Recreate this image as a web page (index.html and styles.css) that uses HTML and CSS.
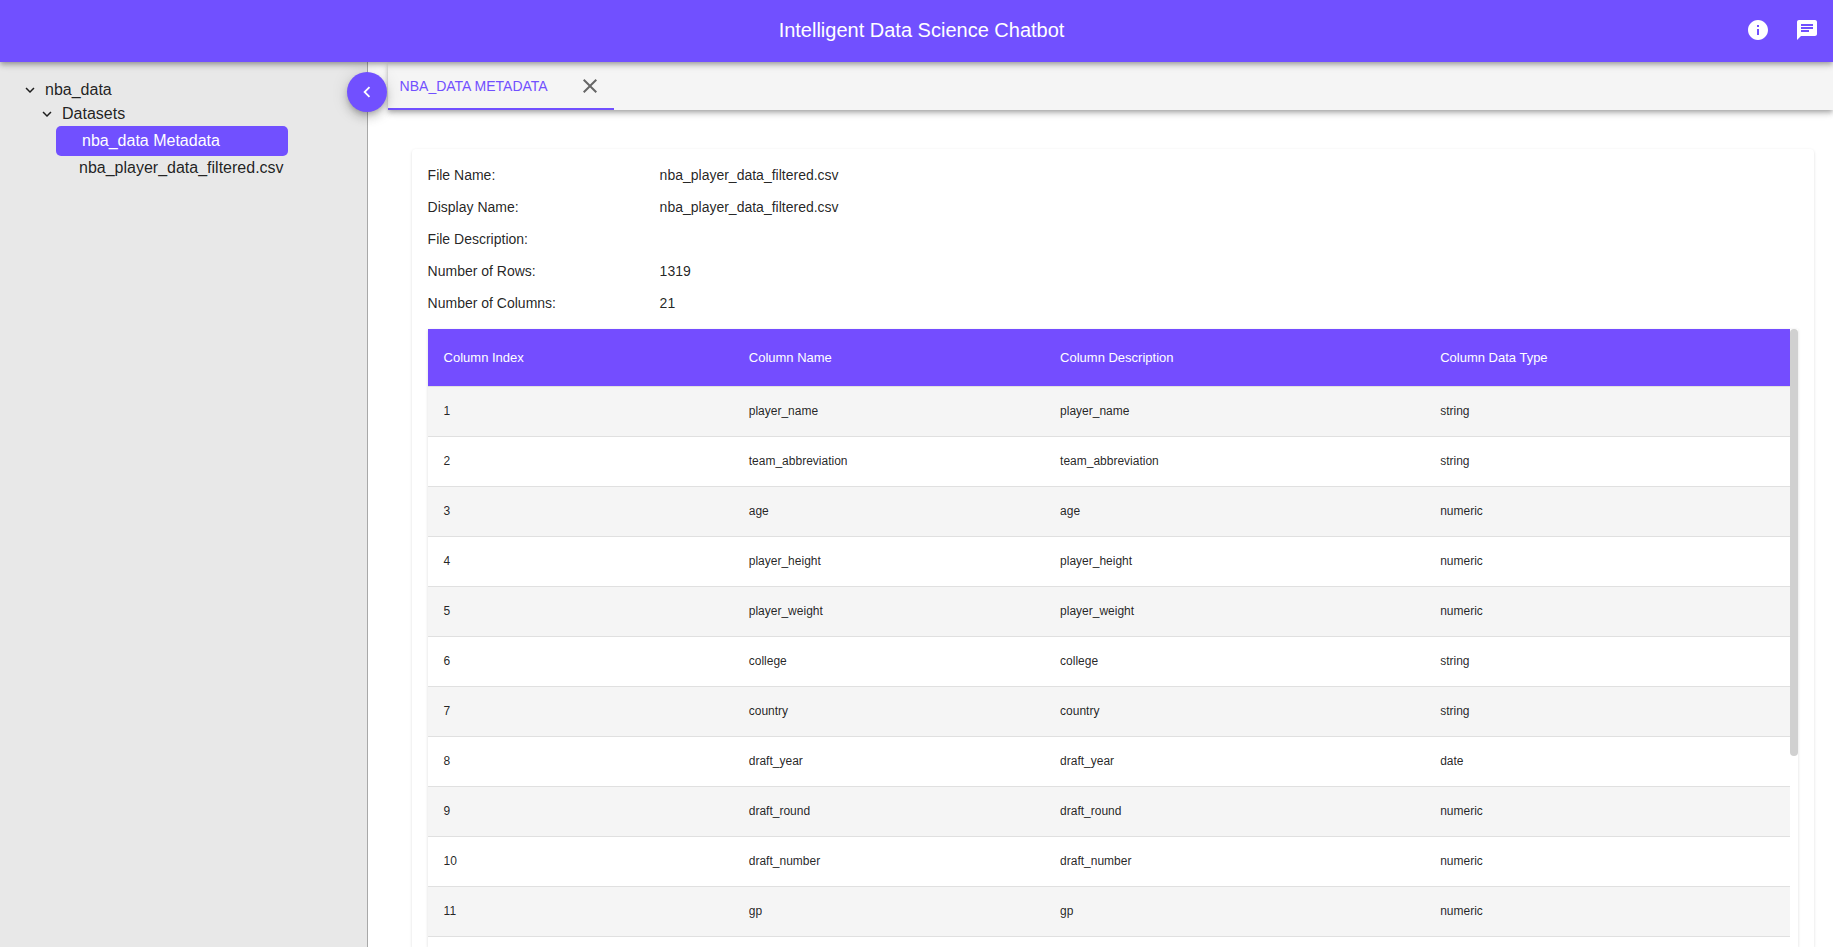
FILE: index.html
```html
<!DOCTYPE html>
<html lang="en">
<head>
<meta charset="utf-8">
<title>Intelligent Data Science Chatbot</title>
<link rel="stylesheet" href="styles.css">
</head>
<body>
<header class="topbar">
  <h1 class="topbar-title">Intelligent Data Science Chatbot</h1>
  <div class="topbar-actions">
    <button class="icon-button" type="button" aria-label="Information"><svg viewBox="0 0 24 24"><path d="M12 2C6.480 2 2 6.480 2 12s4.480 10 10 10 10-4.480 10-10S17.520 2 12 2zm1 15h-2v-6h2v6zm0-8h-2V7h2v2z"/></svg></button>
    <button class="icon-button" type="button" aria-label="Chat"><svg viewBox="0 0 24 24"><path d="M20 2H4c-1.100 0-1.990.9-1.990 2L2 22l4-4h14c1.100 0 2-.9 2-2V4c0-1.100-.9-2-2-2zM6 9h12v2H6V9zm8 5H6v-2h8v2zm4-6H6V6h12v2z"/></svg></button>
  </div>
</header>
<div class="workspace">
  <nav class="sidebar">
    <ul class="tree">
      <li>
        <div class="tree-branch"><svg class="chevron" viewBox="0 0 24 24"><path d="M7.410 8.590 12 13.170l4.590-4.580L18 10l-6 6-6-6 1.410-1.410z"/></svg>nba_data</div>
        <ul class="tree-group">
          <li>
            <div class="tree-branch"><svg class="chevron" viewBox="0 0 24 24"><path d="M7.410 8.590 12 13.170l4.590-4.580L18 10l-6 6-6-6 1.410-1.410z"/></svg>Datasets</div>
            <ul class="tree-leaves">
              <li class="tree-leaf tree-leaf-selected">nba_data Metadata</li>
              <li class="tree-leaf">nba_player_data_filtered.csv</li>
            </ul>
          </li>
        </ul>
      </li>
    </ul>
    <button class="collapse" type="button" aria-label="Collapse sidebar"><svg viewBox="0 0 24 24"><path d="M15.410 7.410 14 6l-6 6 6 6 1.410-1.410L10.830 12z"/></svg></button>
  </nav>
  <main class="content">
    <div class="tabs" role="tablist">
      <div class="tab">
        <button class="tab-label" type="button" role="tab" aria-selected="true">nba_data Metadata</button>
        <button class="tab-close" type="button" aria-label="Close tab"><svg viewBox="0 0 24 24"><path d="M19 6.410 17.590 5 12 10.590 6.410 5 5 6.410 10.590 12 5 17.590 6.410 19 12 13.410 17.590 19 19 17.590 13.410 12z"/></svg></button>
      </div>
    </div>
    <section class="card">
      <dl class="facts">
        <dt>File Name:</dt><dd>nba_player_data_filtered.csv</dd>
        <dt>Display Name:</dt><dd>nba_player_data_filtered.csv</dd>
        <dt>File Description:</dt><dd></dd>
        <dt>Number of Rows:</dt><dd>1319</dd>
        <dt>Number of Columns:</dt><dd>21</dd>
      </dl>
      <div class="table-panel">
        <table class="columns">
          <colgroup><col class="col-index"><col class="col-name"><col class="col-description"><col></colgroup>
          <thead><tr><th>Column Index</th><th>Column Name</th><th>Column Description</th><th>Column Data Type</th></tr></thead>
          <tbody>
            <tr><td>1</td><td>player_name</td><td>player_name</td><td>string</td></tr>
            <tr><td>2</td><td>team_abbreviation</td><td>team_abbreviation</td><td>string</td></tr>
            <tr><td>3</td><td>age</td><td>age</td><td>numeric</td></tr>
            <tr><td>4</td><td>player_height</td><td>player_height</td><td>numeric</td></tr>
            <tr><td>5</td><td>player_weight</td><td>player_weight</td><td>numeric</td></tr>
            <tr><td>6</td><td>college</td><td>college</td><td>string</td></tr>
            <tr><td>7</td><td>country</td><td>country</td><td>string</td></tr>
            <tr><td>8</td><td>draft_year</td><td>draft_year</td><td>date</td></tr>
            <tr><td>9</td><td>draft_round</td><td>draft_round</td><td>numeric</td></tr>
            <tr><td>10</td><td>draft_number</td><td>draft_number</td><td>numeric</td></tr>
            <tr><td>11</td><td>gp</td><td>gp</td><td>numeric</td></tr>
          </tbody>
        </table>
        <div class="scroll-track"><div class="scroll-thumb"></div></div>
      </div>
    </section>
  </main>
</div>
</body>
</html>
```
FILE: styles.css
```css
* { box-sizing: border-box; }

body {
  margin: 0;
  height: 100vh;
  display: flex;
  flex-direction: column;
  overflow: hidden;
  font-family: "Liberation Sans", Arial, sans-serif;
  font-size: 14px;
  line-height: 20px;
  color: rgba(0, 0, 0, 0.87);
  background: #fff;
}

button {
  padding: 0;
  border: 0;
  background: none;
  color: inherit;
  font: inherit;
  cursor: pointer;
}

svg {
  display: block;
  width: 24px;
  height: 24px;
  fill: currentColor;
}

ul {
  margin: 0;
  padding: 0;
  list-style: none;
}

.topbar {
  position: relative;
  z-index: 2;
  flex: none;
  display: grid;
  grid-template-columns: 1fr auto 1fr;
  align-items: center;
  padding: 14px 14px 16px 24px;
  background: #7150ff;
  color: #fff;
  box-shadow: 0 2px 4px -1px rgba(0, 0, 0, 0.2), 0 4px 5px rgba(0, 0, 0, 0.14), 0 1px 10px rgba(0, 0, 0, 0.12);
}

.topbar-title {
  grid-column: 2;
  margin: 0;
  font-size: 20px;
  font-weight: 400;
  line-height: 32px;
}

.topbar-actions {
  display: flex;
  justify-content: flex-end;
  gap: 25px;
}

.workspace {
  flex: 1;
  min-height: 0;
  display: flex;
}

.sidebar {
  position: relative;
  flex: none;
  width: calc(20% + 1px);
  padding: 16px 21px;
  border-right: 1px solid #a8a8a8;
  background: #e8e8e8;
}

.tree {
  width: fit-content;
  font-size: 16px;
  line-height: 24px;
}

.tree-branch {
  display: flex;
  align-items: center;
  gap: 6px;
}

.chevron {
  width: 18px;
  height: 18px;
}

.tree-group { padding-left: 17px; }

.tree-leaves {
  min-width: 250px;
  padding-left: 18px;
}

.tree-leaf { padding-left: 23px; }

.tree-leaf-selected {
  padding: 3px 26px;
  border-radius: 5px;
  background: #7150ff;
  color: #fff;
}

.collapse {
  position: absolute;
  z-index: 1;
  top: 10px;
  right: -20px;
  display: grid;
  place-items: center;
  width: 40px;
  height: 40px;
  border-radius: 50%;
  background: #7150ff;
  color: #fff;
  box-shadow: 0 3px 5px -1px rgba(0, 0, 0, 0.2), 0 6px 10px rgba(0, 0, 0, 0.14), 0 1px 18px rgba(0, 0, 0, 0.12);
}

.collapse svg {
  width: 22px;
  height: 22px;
}

.content {
  flex: 1;
  min-width: 0;
  display: flex;
  flex-direction: column;
  padding-left: 20px;
}

.tabs {
  flex: none;
  display: flex;
  background: #f5f5f5;
  box-shadow: 0 2px 4px -1px rgba(0, 0, 0, 0.2), 0 4px 5px rgba(0, 0, 0, 0.14), 0 1px 10px rgba(0, 0, 0, 0.12);
}

.tab {
  display: flex;
  justify-content: space-between;
  align-items: center;
  min-width: 226px;
  height: 48px;
  padding: 2px 12px 0;
  border-bottom: 2px solid #7150ff;
}

.tab-label {
  color: #7150ff;
  text-transform: uppercase;
}

.tab-close { color: #666; }

.card {
  flex: 1;
  display: flex;
  flex-direction: column;
  margin: 39px 19px 0 24px;
  padding: 16px 16px 0;
  border-radius: 4px 4px 0 0;
  box-shadow: 0 1px 3px rgba(0, 0, 0, 0.14);
}

.facts {
  display: grid;
  grid-template-columns: 232px 1fr;
  gap: 12px 0;
  margin: 0 0 16px;
}

.facts dt,
.facts dd {
  margin: 0;
  min-height: 20px;
}

.table-panel {
  flex: 1;
  display: flex;
  box-shadow: 0 1px 3px rgba(0, 0, 0, 0.14);
}

.columns {
  flex: 1;
  align-self: flex-start;
  table-layout: fixed;
  border-collapse: separate;
  border-spacing: 0;
  font-size: 12px;
}

.col-index { width: 22.4%; }

.col-name { width: 22.85%; }

.col-description { width: 27.9%; }

.columns th,
.columns td {
  height: 50px;
  padding: 0 16px 2px;
  border-bottom: 1px solid #e0e0e0;
  text-align: left;
}

.columns th {
  height: 58px;
  padding-bottom: 0;
  background: #744dff;
  color: #fff;
  font-size: 13px;
  font-weight: 400;
}

.columns tbody tr:nth-child(odd) { background: #f5f5f5; }

.scroll-track {
  flex: none;
  width: 8px;
}

.scroll-thumb {
  height: 427px;
  border-radius: 4px;
  background: #d0d0d0;
}
```
